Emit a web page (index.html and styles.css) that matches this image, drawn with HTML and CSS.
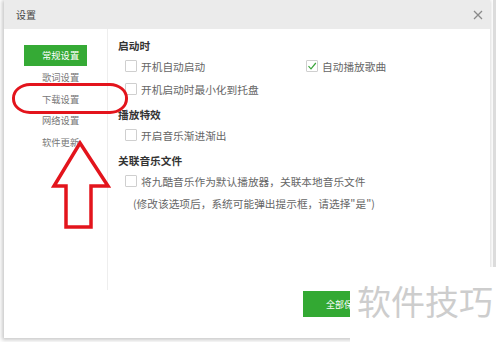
FILE: index.html
```html
<!DOCTYPE html>
<html lang="zh">
<head>
<meta charset="utf-8">
<link rel="stylesheet" href="styles.css">
</head>
<body>
<div class="stage">
  <div class="window">
    <div class="titlebar">
      <span class="title">设置</span>
      <svg class="close" width="10" height="10" viewBox="0 0 10 10"><path d="M1 1L9 9M9 1L1 9" stroke="#8a8a8a" stroke-width="1.3"/></svg>
    </div>
    <div class="main">
      <nav class="sidebar">
        <div class="nav-item active">常规设置</div>
        <div class="nav-item">歌词设置</div>
        <div class="nav-item">下载设置</div>
        <div class="nav-item">网络设置</div>
        <div class="nav-item">软件更新</div>
      </nav>
      <div class="content">
        <section class="group">
          <h3>启动时</h3>
          <div class="row two">
            <label class="opt"><span class="box"></span>开机自动启动</label>
            <label class="opt"><span class="box checked"><svg width="10" height="10" viewBox="0 0 10 10"><path d="M1.5 5.2L4 7.8L8.8 2" fill="none" stroke="#3aa53a" stroke-width="1.2"/></svg></span>自动播放歌曲</label>
          </div>
          <div class="row"><label class="opt"><span class="box"></span>开机启动时最小化到托盘</label></div>
        </section>
        <section class="group">
          <h3>播放特效</h3>
          <div class="row"><label class="opt"><span class="box"></span>开启音乐渐进渐出</label></div>
        </section>
        <section class="group">
          <h3>关联音乐文件</h3>
          <div class="row"><label class="opt"><span class="box"></span>将九酷音乐作为默认播放器，关联本地音乐文件</label></div>
          <p class="note">(修改该选项后，系统可能弹出提示框，请选择"是")</p>
        </section>
      </div>
    </div>
    <div class="footer">
      <button class="save">全部保存</button>
    </div>
  </div>
  <div class="shadow-line"></div>
  <div class="circle"></div>
  <svg class="arrow" width="70" height="100" viewBox="50 138 70 100"><path d="M80 143L108 186L91 186L91 227L66 227L66 186L54 186Z" fill="none" stroke="#e3141c" stroke-width="3.5" stroke-linejoin="miter"/></svg>
  <div class="watermark">软件技巧</div>
</div>
</body>
</html>
```
FILE: styles.css
```css
* { box-sizing: border-box; margin: 0; padding: 0; }
body { background: #fff; font-family: "Noto Sans CJK SC", "Noto Sans", sans-serif; }
.stage { position: relative; width: 500px; height: 342px; overflow: hidden; background: #fff; }
.window {
  margin-left: 4px; width: 486px; height: 338px; background: #fff;
  display: flex; flex-direction: column;
  box-shadow: -1px 1px 4px 1px rgba(0,0,0,0.22);
}
.titlebar {
  height: 29px; flex: none; background: #ebebeb;
  display: flex; align-items: center; justify-content: space-between;
  padding: 0 7px 0 12px;
}
.title { font-size: 10px; color: #444; }
.main { display: flex; height: 261px; flex: none; }
.sidebar {
  width: 104px; flex: none; border-right: 1px solid #eeeeee;
  padding: 16px 0 0 20px;
}
.nav-item { height: 21.5px; line-height: 21.5px; font-size: 9.3px; color: #777; padding-left: 18px; }
.nav-item.active { width: 63px; height: 21px; background: #35aa35; color: #fff; margin-bottom: 1px; }
.content { flex: 1; padding: 7px 0 0 10px; }
.group { margin-bottom: 6px; }
.group h3 { height: 20px; line-height: 20px; font-size: 10.7px; font-weight: 700; color: #333; }
.row { display: flex; height: 20px; align-items: center; padding-left: 7px; margin-bottom: 3px; }
.row.two .opt:first-child { width: 181px; }
.opt { display: flex; align-items: center; font-size: 10.7px; color: #666; }
.box {
  width: 12px; height: 12px; border: 1px solid #cfcfcf; border-radius: 1px; margin-right: 4px;
  display: flex; align-items: center; justify-content: center; background: #fff;
}
.note { font-size: 10.7px; color: #666; padding-left: 15px; height: 20px; line-height: 20px; margin-top: 2px; }
.footer { flex: 1; display: flex; justify-content: flex-end; align-items: flex-start; padding: 1px 109px 0 0; }
.save {
  width: 78px; height: 26px; border: none; background: #33a933; color: #fff;
  font-family: inherit; font-size: 9px; padding-left: 4px;
}
.shadow-line { position: absolute; left: 493px; top: 0; width: 3px; height: 267px; background: #dcdcdc; }
.circle {
  position: absolute; left: 12px; top: 83px; width: 116px; height: 31px;
  border: 3px solid #e3141c; border-radius: 18px / 15px;
}
.arrow { position: absolute; left: 50px; top: 138px; }
.watermark {
  position: absolute; left: 350px; top: 267px; right: 0; bottom: 0; background: #fff;
  font-size: 34px; color: #cdcdcd; padding: 14px 0 0 7px; line-height: 40px; letter-spacing: 0;
}
```
